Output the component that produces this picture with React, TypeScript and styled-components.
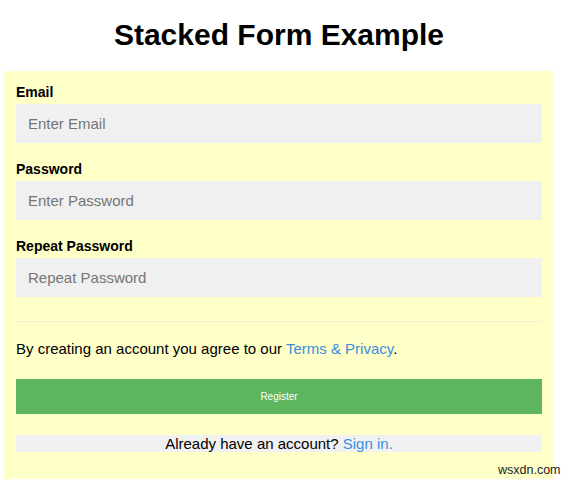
import styled, { createGlobalStyle } from "styled-components";

const GlobalStyle = createGlobalStyle`
  body {
    margin: 0;
    background: #ffffff;
    font-family: "Liberation Sans", Arial, sans-serif;
    color: #000000;
  }
`;

type Field = {
  id: string;
  label: string;
  placeholder: string;
  type: string;
};

const fields: Field[] = [
  { id: "email", label: "Email", placeholder: "Enter Email", type: "text" },
  { id: "psw", label: "Password", placeholder: "Enter Password", type: "password" },
  { id: "psw-repeat", label: "Repeat Password", placeholder: "Repeat Password", type: "password" },
];

export default function App() {
  return (
    <Page>
      <GlobalStyle />
      <Title>Stacked Form Example</Title>
      <Panel onSubmit={(e) => e.preventDefault()}>
        {fields.map((field) => (
          <FieldGroup key={field.id}>
            <Label htmlFor={field.id}>{field.label}</Label>
            <Input id={field.id} type={field.type} placeholder={field.placeholder} />
          </FieldGroup>
        ))}
        <Divider />
        <Agreement>
          By creating an account you agree to our <Link href="#">Terms &amp; Privacy</Link>.
        </Agreement>
        <RegisterButton type="submit">Register</RegisterButton>
        <SignIn>
          Already have an account? <Link href="#">Sign in.</Link>
        </SignIn>
      </Panel>
      <Watermark>wsxdn.com</Watermark>
    </Page>
  );
}

const Page = styled.div`
  position: relative;
  width: 550px;
  padding: 18px 17px 4px 4px;
`;

const Title = styled.h1`
  margin: 0 0 19px;
  font-size: 30px;
  line-height: 34px;
  font-weight: bold;
  text-align: center;
`;

const Panel = styled.form`
  display: flex;
  flex-direction: column;
  background: #ffffc8;
  padding: 13px 12px 27px;
`;

const FieldGroup = styled.div`
  display: flex;
  flex-direction: column;
  gap: 4px;
  margin-bottom: 18px;
`;

const Label = styled.label`
  font-size: 14px;
  line-height: 16px;
  font-weight: bold;
`;

const Input = styled.input`
  box-sizing: border-box;
  height: 39px;
  padding: 0 12px;
  border: none;
  outline: none;
  background: #f0f0f0;
  font-family: inherit;
  font-size: 15px;
  color: #000;

  &::placeholder {
    color: #757575;
  }
`;

const Divider = styled.hr`
  width: 100%;
  margin: 6px 0 18px;
  border: none;
  border-top: 1px solid #f3f1d8;
`;

const Agreement = styled.p`
  margin: 0 0 22px;
  font-size: 15px;
  line-height: 17px;
`;

const Link = styled.a`
  color: #3a8ee0;
  text-decoration: none;
`;

const RegisterButton = styled.button`
  height: 35px;
  margin: 0 0 21px;
  border: none;
  background: #5db65d;
  color: #ffffff;
  font-family: inherit;
  font-size: 10px;
  cursor: pointer;
`;

const SignIn = styled.div`
  background: #f1f1f1;
  font-size: 15px;
  line-height: 17px;
  text-align: center;
`;

const Watermark = styled.span`
  position: absolute;
  left: 498px;
  top: 463px;
  font-size: 12.5px;
  color: #222222;
`;
